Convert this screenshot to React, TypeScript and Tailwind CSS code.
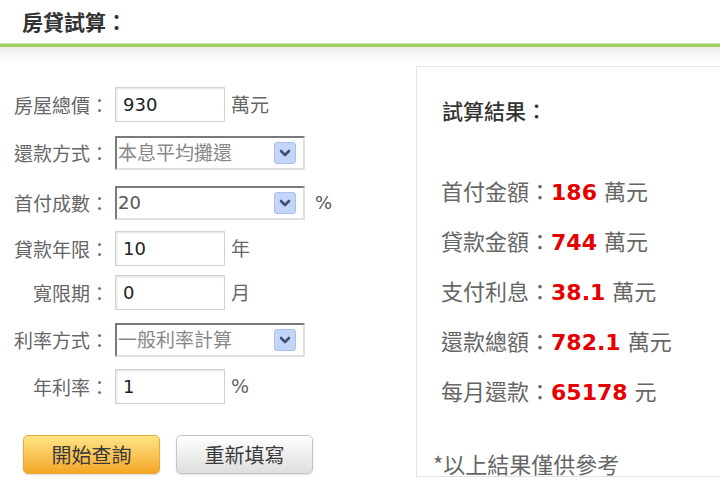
const cjk = "font-['Noto_Sans_CJK_TC','Noto_Sans',sans-serif]";
const num = "font-['DejaVu_Sans','Noto_Sans_CJK_TC',sans-serif]";

function Arrow() {
  return (
    <span className="flex h-[22px] w-[22px] items-center justify-center rounded-[3px] border border-[#a9c0ee] bg-[#c4d6f8]">
      <svg width="12" height="8" viewBox="0 0 12 8">
        <path d="M2 2 L6 6 L10 2" fill="none" stroke="#3f5275" strokeWidth="2.6" strokeLinecap="round" strokeLinejoin="round" />
      </svg>
    </span>
  );
}

function Label({ text }: { text: string }) {
  return <div className={`w-[109px] shrink-0 text-right text-[19px] leading-none text-[#666] ${cjk}`}>{text}</div>;
}

function TextRow({ label, value, unit, mt }: { label: string; value: string; unit: string; mt: string }) {
  return (
    <div className={`flex h-[35px] items-center ${mt}`}>
      <Label text={label} />
      <div className={`ml-[6px] flex h-[35px] w-[110px] items-center border border-[#d2d2d2] bg-white pl-[7px] text-[18px] text-[#222] shadow-[inset_1px_1px_2px_rgba(0,0,0,0.12)] ${num}`}>
        {value}
      </div>
      <span className={`ml-[6px] text-[19px] text-[#666] ${unit === "%" ? num : cjk}`}>{unit}</span>
    </div>
  );
}

function SelectRow({ label, value, unit, mt, numeric }: { label: string; value: string; unit?: string; mt: string; numeric?: boolean }) {
  return (
    <div className={`flex h-[35px] items-center ${mt}`}>
      <Label text={label} />
      <div className="ml-[6px] flex h-[34px] w-[190px] items-center justify-between border-2 border-t-[#7a7a7a] border-l-[#7a7a7a] border-r-[#e0e0e0] border-b-[#e0e0e0] bg-white pl-[1px] pr-[7px]">
        <span className={`${numeric ? `text-[18px] ${num} text-[#555]` : `text-[19px] ${cjk} text-[#888]`}`}>{value}</span>
        <Arrow />
      </div>
      {unit && <span className={`ml-[10px] text-[18px] text-[#555] ${num}`}>{unit}</span>}
    </div>
  );
}

function ResultRow({ label, value, unit }: { label: string; value: string; unit: string }) {
  return (
    <div className={`flex h-[30px] items-baseline text-[22px] leading-[30px] text-[#666] ${cjk}`}>
      <span>{label}：</span>
      <span className={`text-[22px] font-bold text-[#e60000] ${num}`}>{value}</span>
      <span className="ml-[7px]">{unit}</span>
    </div>
  );
}

export default function App() {
  return (
    <div className="h-[491px] w-[720px] overflow-hidden bg-white">
      <div className="flex h-[43px] items-center pl-[22px]">
        <span className={`text-[21px] font-semibold text-[#333] ${cjk}`}>房貸試算：</span>
      </div>
      <div className="h-[1px] bg-[#cfe8ac]" />
      <div className="h-[3px] bg-[#9fcf62]" />
      <div className="h-[15px] bg-gradient-to-b from-[#ececec] to-white" />

      <div className="flex">
        <div className="w-[416px] shrink-0 pt-[25px]">
          <TextRow label="房屋總價：" value="930" unit="萬元" mt="mt-0" />
          <SelectRow label="還款方式：" value="本息平均攤還" mt="mt-[13px]" />
          <SelectRow label="首付成數：" value="20" unit="%" mt="mt-[15px]" numeric />
          <TextRow label="貸款年限：" value="10" unit="年" mt="mt-[11px]" />
          <TextRow label="寬限期：" value="0" unit="月" mt="mt-[9px]" />
          <SelectRow label="利率方式：" value="一般利率計算" mt="mt-[12px]" />
          <TextRow label="年利率：" value="1" unit="%" mt="mt-[12px]" />

          <div className="mt-[31px] flex gap-[16px] pl-[23px]">
            <button className={`flex h-[39px] w-[137px] items-center justify-center rounded-[5px] border border-[#e9a93c] bg-gradient-to-b from-[#fee583] to-[#f4a61f] text-[20px] text-[#3a3a3a] shadow-[0_1px_2px_rgba(0,0,0,0.15)] ${cjk}`}>
              開始查詢
            </button>
            <button className={`flex h-[39px] w-[137px] items-center justify-center rounded-[5px] border border-[#c4c4c4] bg-gradient-to-b from-white to-[#dedede] text-[20px] text-[#3a3a3a] shadow-[0_1px_2px_rgba(0,0,0,0.12)] ${cjk}`}>
              重新填寫
            </button>
          </div>
        </div>

        <div className="mt-[4px] h-[411px] flex-1 border border-r-0 border-[#e3e3e3] bg-white">
          <div className={`mt-[28px] pl-[25px] text-[21px] font-medium leading-[30px] text-[#333] ${cjk}`}>試算結果：</div>
          <div className="mt-[50px] flex flex-col gap-[20px] pl-[24px]">
            <ResultRow label="首付金額" value="186" unit="萬元" />
            <ResultRow label="貸款金額" value="744" unit="萬元" />
            <ResultRow label="支付利息" value="38.1" unit="萬元" />
            <ResultRow label="還款總額" value="782.1" unit="萬元" />
            <ResultRow label="每月還款" value="65178" unit="元" />
          </div>
          <div className={`mt-[43px] pl-[16px] text-[22px] leading-[30px] text-[#666] ${cjk}`}>*以上結果僅供參考</div>
        </div>
      </div>
    </div>
  );
}
